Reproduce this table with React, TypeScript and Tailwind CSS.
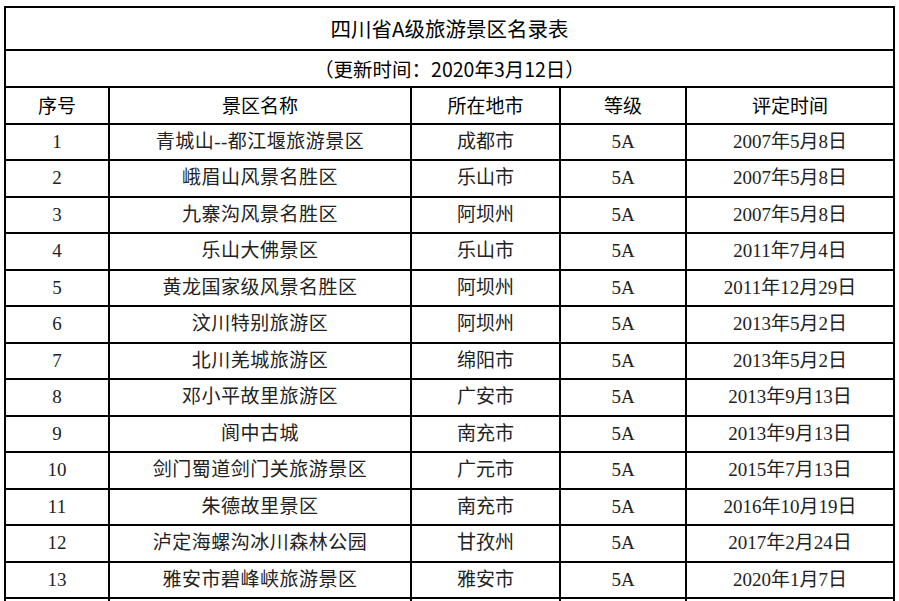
const rows: [string, string, string, string, string][] = [
  ['1', '青城山--都江堰旅游景区', '成都市', '5A', '2007年5月8日'],
  ['2', '峨眉山风景名胜区', '乐山市', '5A', '2007年5月8日'],
  ['3', '九寨沟风景名胜区', '阿坝州', '5A', '2007年5月8日'],
  ['4', '乐山大佛景区', '乐山市', '5A', '2011年7月4日'],
  ['5', '黄龙国家级风景名胜区', '阿坝州', '5A', '2011年12月29日'],
  ['6', '汶川特别旅游区', '阿坝州', '5A', '2013年5月2日'],
  ['7', '北川羌城旅游区', '绵阳市', '5A', '2013年5月2日'],
  ['8', '邓小平故里旅游区', '广安市', '5A', '2013年9月13日'],
  ['9', '阆中古城', '南充市', '5A', '2013年9月13日'],
  ['10', '剑门蜀道剑门关旅游景区', '广元市', '5A', '2015年7月13日'],
  ['11', '朱德故里景区', '南充市', '5A', '2016年10月19日'],
  ['12', '泸定海螺沟冰川森林公园', '甘孜州', '5A', '2017年2月24日'],
  ['13', '雅安市碧峰峡旅游景区', '雅安市', '5A', '2020年1月7日'],
  ['', '', '', '', ''],
];

const headers = ['序号', '景区名称', '所在地市', '等级', '评定时间'];

const sans = "font-['Noto_Sans_CJK_SC',sans-serif]";
const serif = "font-['Liberation_Serif','Noto_Sans_CJK_SC',serif]";

export default function App() {
  return (
    <div className="h-[601px] w-[899px] overflow-hidden bg-white pl-[4px] pt-[6px]">
      <div className="w-[891px] border-l-2 border-t-2 border-black">
        <div
          className={`flex h-[43px] items-center justify-center border-b-2 border-r-2 border-black text-[20.5px] text-black ${sans}`}
        >
          四川省A级旅游景区名录表
        </div>
        <div
          className={`flex h-[37px] items-center justify-center border-b-2 border-r-2 border-black text-[19.5px] text-black ${sans}`}
        >
          （更新时间：2020年3月12日）
        </div>
        <div className="grid grid-cols-[104px_302px_149px_126px_208px]">
          {headers.map((h) => (
            <div
              key={h}
              className={`flex h-[37px] items-center justify-center border-b-2 border-r-2 border-black text-[19px] text-black ${sans}`}
            >
              {h}
            </div>
          ))}
          {rows.map((r, i) =>
            r.map((cell, j) => (
              <div
                key={`${i}-${j}`}
                className={`flex items-center justify-center border-b-2 border-r-2 border-black text-[19px] text-[#222] ${serif} ${
                  i % 2 === 0 ? 'h-[36px]' : 'h-[37px]'
                } ${j === 1 ? 'tracking-[0.5px]' : ''}`}
              >
                {cell}
              </div>
            ))
          )}
        </div>
      </div>
    </div>
  );
}
